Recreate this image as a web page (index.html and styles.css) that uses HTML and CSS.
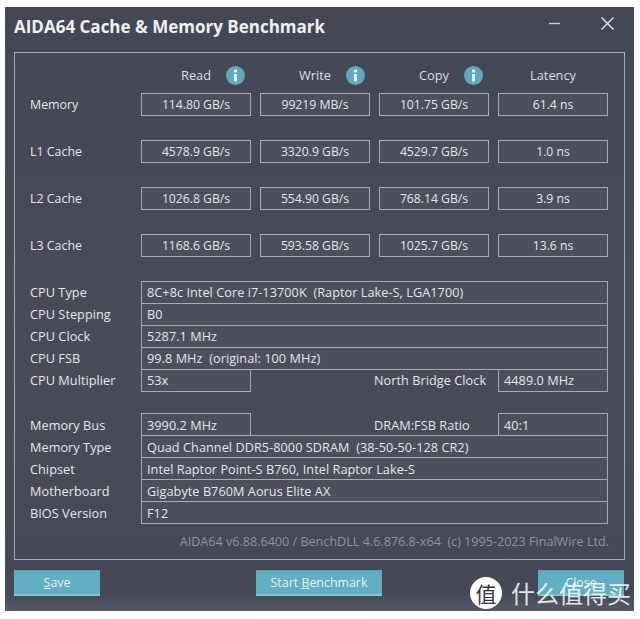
FILE: index.html
```html
<!DOCTYPE html>
<html lang="en">
<head>
<meta charset="UTF-8">
<meta name="viewport" content="width=device-width, initial-scale=1.0">
<title>AIDA64 Cache &amp; Memory Benchmark</title>
<link rel="stylesheet" href="styles.css">
</head>
<body>

<div class="window">
  <div class="titlebar">
    <div class="title">AIDA64 Cache &amp; Memory Benchmark</div>
    <div class="winbtns">
      <svg class="winicon" width="13" height="13" viewBox="0 0 13 13"><path d="M1 6.5H12" stroke="#c9ccd1" stroke-width="1.3"/></svg>
      <svg class="winicon" width="13" height="13" viewBox="0 0 13 13"><path d="M0.5 0.5L12.5 12.5M12.5 0.5L0.5 12.5" stroke="#eceef0" stroke-width="1.3"/></svg>
    </div>
  </div>

  <div class="frame">
    <div class="heads">
      <div></div>
      <div class="head"><span></span><span>Read</span><svg class="info" viewBox="0 0 19 19"><circle cx="9.5" cy="9.5" r="9.5" fill="#5fa9c0"/><circle cx="9.5" cy="5" r="1.7" fill="#e8f2f5"/><rect x="8" y="8" width="3" height="7.5" fill="#e8f2f5"/></svg></div>
      <div class="head"><span></span><span>Write</span><svg class="info" viewBox="0 0 19 19"><circle cx="9.5" cy="9.5" r="9.5" fill="#5fa9c0"/><circle cx="9.5" cy="5" r="1.7" fill="#e8f2f5"/><rect x="8" y="8" width="3" height="7.5" fill="#e8f2f5"/></svg></div>
      <div class="head"><span></span><span>Copy</span><svg class="info" viewBox="0 0 19 19"><circle cx="9.5" cy="9.5" r="9.5" fill="#5fa9c0"/><circle cx="9.5" cy="5" r="1.7" fill="#e8f2f5"/><rect x="8" y="8" width="3" height="7.5" fill="#e8f2f5"/></svg></div>
      <div class="head"><span></span><span>Latency</span><span></span></div>
    </div>

    <div class="bench">
      <div class="label">Memory</div>
      <div class="box center">114.80 GB/s</div>
      <div class="box center">99219 MB/s</div>
      <div class="box center">101.75 GB/s</div>
      <div class="box center">61.4 ns</div>

      <div class="label">L1 Cache</div>
      <div class="box center">4578.9 GB/s</div>
      <div class="box center">3320.9 GB/s</div>
      <div class="box center">4529.7 GB/s</div>
      <div class="box center">1.0 ns</div>

      <div class="label">L2 Cache</div>
      <div class="box center">1026.8 GB/s</div>
      <div class="box center">554.90 GB/s</div>
      <div class="box center">768.14 GB/s</div>
      <div class="box center">3.9 ns</div>

      <div class="label">L3 Cache</div>
      <div class="box center">1168.6 GB/s</div>
      <div class="box center">593.58 GB/s</div>
      <div class="box center">1025.7 GB/s</div>
      <div class="box center">13.6 ns</div>
    </div>

    <div class="specs first">
      <div class="label">CPU Type</div>
      <div class="box wide">8C+8c Intel Core i7-13700K&nbsp; (Raptor Lake-S, LGA1700)</div>
      <div class="label">CPU Stepping</div>
      <div class="box wide">B0</div>
      <div class="label">CPU Clock</div>
      <div class="box wide">5287.1 MHz</div>
      <div class="label">CPU FSB</div>
      <div class="box wide">99.8 MHz&nbsp; (original: 100 MHz)</div>
      <div class="label">CPU Multiplier</div>
      <div class="box">53x</div>
      <div class="label side">North Bridge Clock</div>
      <div class="box">4489.0 MHz</div>
    </div>

    <div class="specs second">
      <div class="label">Memory Bus</div>
      <div class="box">3990.2 MHz</div>
      <div class="label side">DRAM:FSB Ratio</div>
      <div class="box">40:1</div>
      <div class="label">Memory Type</div>
      <div class="box wide">Quad Channel DDR5-8000 SDRAM&nbsp; (38-50-50-128 CR2)</div>
      <div class="label">Chipset</div>
      <div class="box wide">Intel Raptor Point-S B760, Intel Raptor Lake-S</div>
      <div class="label">Motherboard</div>
      <div class="box wide">Gigabyte B760M Aorus Elite AX</div>
      <div class="label">BIOS Version</div>
      <div class="box wide">F12</div>
    </div>

    <div class="credit">AIDA64 v6.88.6400 / BenchDLL 4.6.876.8-x64&nbsp; (c) 1995-2023 FinalWire Ltd.</div>
  </div>

  <div class="buttons">
    <div class="btn small"><span><u>S</u>ave</span></div>
    <div class="btn large"><span>Start <u>B</u>enchmark</span></div>
    <div class="btn small"><span>Close</span></div>
  </div>

  <div class="watermark">
    <div class="stamp">值</div>
    <div class="brand">什么值得买</div>
  </div>
</div>

</body>
</html>
```

FILE: styles.css
```css
body {
  font-family: "Open Sans", "Noto Sans", sans-serif;
  font-size: 12.2px;
  background-color: #fff;
  color: #e4e6e9;
  margin: 0;
  padding: 0;
}
.window {
  position: relative;
  width: 629px;
  height: 604px;
  margin: 7px 0 0 5px;
  background: linear-gradient(180deg, #434854 0%, #474c58 60%, #444955 97%, #555a66 100%);
  box-sizing: border-box;
}
.titlebar {
  display: flex;
  justify-content: space-between;
  align-items: flex-start;
  height: 45px;
  padding: 0 20px 0 9px;
  box-sizing: border-box;
}
.title {
  font-size: 17px;
  font-weight: 700;
  line-height: 40px;
  color: #eef0f2;
}
.winbtns {
  display: flex;
  gap: 40px;
  margin-top: 10px;
}
.frame {
  height: 508px;
  margin: 0 9px;
  width: 611px;
  padding: 0 15px;
  box-sizing: border-box;
  border: 1px solid #a4a9b2;
}
.heads {
  display: grid;
  grid-template-columns: 102px repeat(4, 110px);
  column-gap: 9px;
  height: 40px;
}
.head {
  display: grid;
  grid-template-columns: 1fr auto 1fr;
  align-items: center;
  text-align: center;
  height: 44px;
  font-size: 12.8px;
  color: #dcdfe3;
}
.info {
  width: 19px;
  height: 19px;
  margin-left: 15px;
}
.bench {
  display: grid;
  grid-template-columns: 102px repeat(4, 110px);
  grid-auto-rows: 24px;
  column-gap: 9px;
  row-gap: 23px;
}
.bench .label {
  font-size: 12.4px;
  padding-bottom: 1px;
}
.label {
  display: flex;
  align-items: center;
  color: #e4e6e9;
}
.box {
  display: flex;
  align-items: center;
  height: 23px;
  padding-left: 5px;
  box-sizing: border-box;
  border: 1px solid #a4a9b2;
  background-color: #4b505c;
  color: #e4e6e9;
  white-space: nowrap;
}
.center {
  justify-content: center;
  padding-left: 0;
}
.specs {
  display: grid;
  grid-template-columns: 102px 110px 1fr 110px;
  grid-auto-rows: 22px;
  column-gap: 9px;
  margin-top: 23px;
  width: 578px;
  font-size: 12.7px;
  letter-spacing: 0.05px;
}
.specs.first .box {
  padding-bottom: 2px;
}
.specs.second {
  margin-top: 22px;
}
.specs.second .label {
  padding-top: 2px;
}
.wide {
  grid-column: 2 / -1;
}
.side {
  padding-left: 114px;
}
.credit {
  margin-top: 10px;
  line-height: 18px;
  text-align: right;
  font-size: 12.6px;
  color: #8d929b;
}
.buttons {
  display: flex;
  justify-content: space-between;
  margin: 10px 10px 0 9px;
  font-size: 12.4px;
}
.btn {
  display: flex;
  align-items: center;
  justify-content: center;
  height: 26px;
  box-sizing: border-box;
  background-color: #62aec2;
  border-top: 1px solid #57a2b7;
  border-bottom: 2px solid #82c2d1;
  color: #e6eef1;
}
.btn.small {
  width: 86px;
}
.btn.large {
  width: 126px;
}
.watermark {
  position: absolute;
  left: 465px;
  top: 570px;
  display: flex;
  align-items: center;
  gap: 9px;
  color: #fff;
}
.stamp {
  width: 32px;
  height: 32px;
  border-radius: 50%;
  background-color: #fff;
  color: #33363c;
  font-family: "Noto Sans CJK SC", sans-serif;
  font-size: 21px;
  line-height: 32px;
  text-align: center;
}
.brand {
  font-family: "Noto Sans CJK SC", sans-serif;
  font-size: 24px;
  line-height: 32px;
  opacity: 0.85;
}
```
